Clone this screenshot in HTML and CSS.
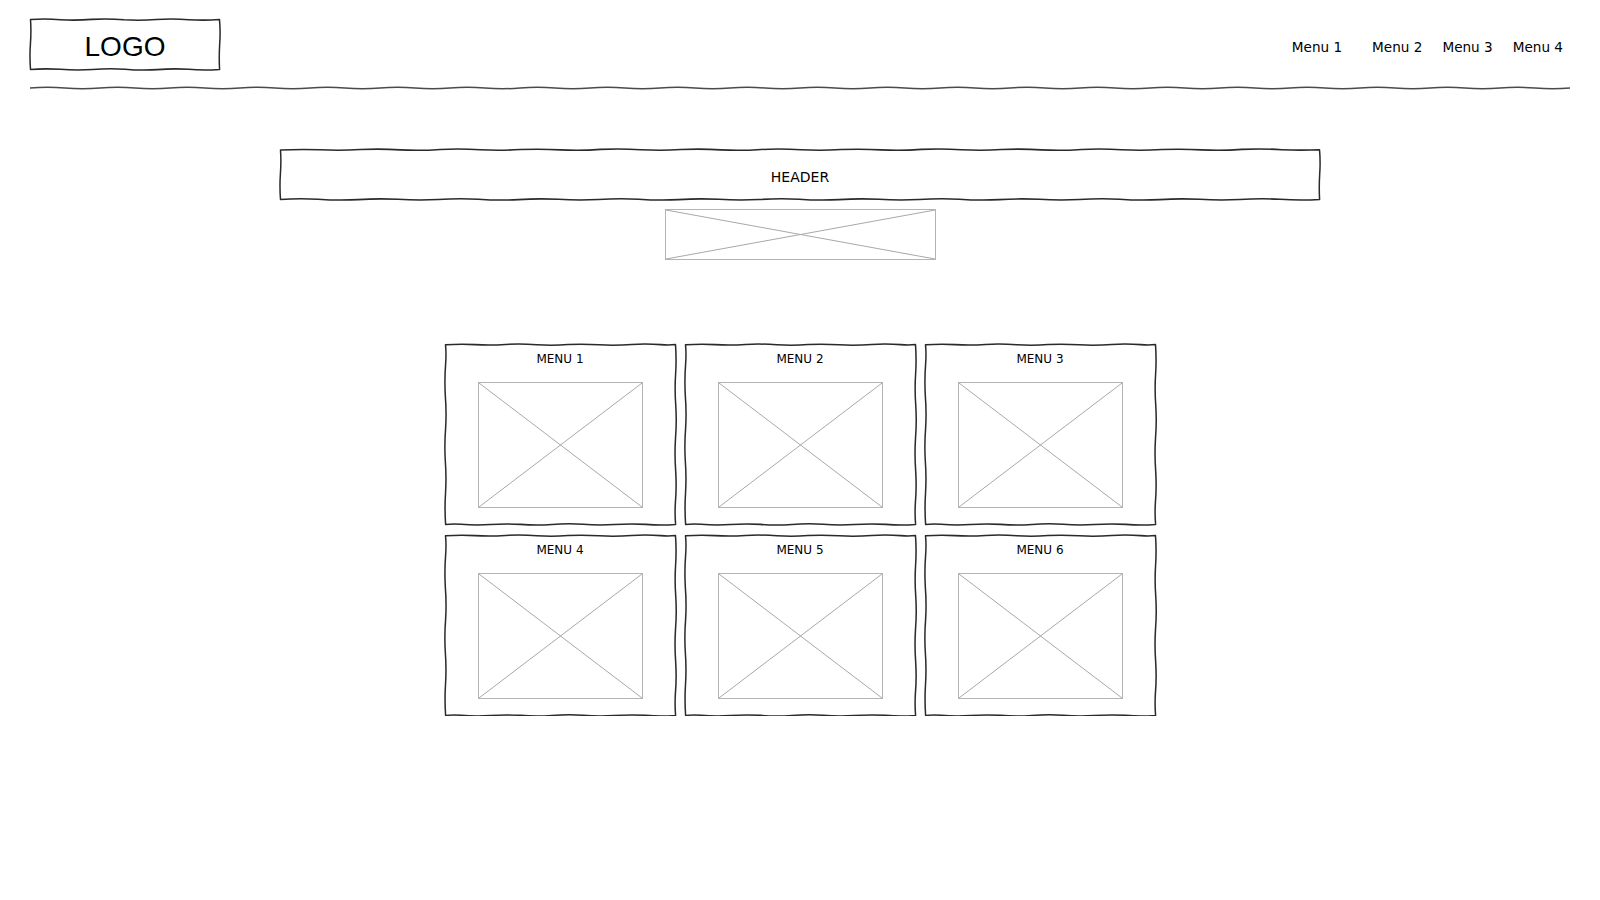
FILE: index.html
```html
<!DOCTYPE html>
<html lang="en">
<head>
  <meta charset="UTF-8">
  <meta name="viewport" content="width=device-width, initial-scale=1.0">
  <title>Wireframe</title>
  <link rel="stylesheet" href="styles.css">
</head>
<body>
  <!-- hand-drawn outlines, reused by every sketchy box -->
  <svg class="defs" width="0" height="0" aria-hidden="true">
    <symbol id="logo-outline" viewBox="0 0 190 51" preserveAspectRatio="none">
      <path d="M1.5,1.5 Q16,0.4 31,1.6 Q46,2.6 62,1.3 Q78,0.3 94,1.7 Q110,2.7 126,1.4 Q142,0.4 158,1.6 Q174,2.6 188.5,1.4 Q189.6,13 188.7,25 Q187.9,38 188.6,49.5 Q173,50.6 158,49.4 Q143,48.4 127,49.7 Q111,50.7 95,49.3 Q79,48.3 63,49.6 Q47,50.6 31,49.4 Q16,48.5 1.5,49.5 Q0.5,37 1.4,25 Q2.3,13 1.5,1.5 Z"/>
    </symbol>
    <symbol id="header-outline" viewBox="0 0 1040 51" preserveAspectRatio="none">
      <path d="M1.5,2 Q21,0.9 41,1.7 Q61,2.6 81,1.5 Q101,0.5 121,1.8 Q141,2.8 161,1.4 Q181,0.4 201,1.7 Q221,2.7 241,1.5 Q261,0.6 281,1.8 Q301,2.8 321,1.3 Q341,0.4 361,1.6 Q381,2.6 401,1.5 Q421,0.5 441,1.8 Q461,2.8 481,1.4 Q501,0.5 521,1.7 Q541,2.7 561,1.5 Q581,0.6 601,1.8 Q621,2.8 641,1.3 Q661,0.4 681,1.6 Q701,2.6 721,1.5 Q741,0.5 761,1.8 Q781,2.8 801,1.4 Q821,0.5 841,1.7 Q861,2.7 881,1.5 Q901,0.6 921,1.8 Q941,2.8 961,1.3 Q981,0.4 1001,1.6 Q1020,2.5 1038.5,1.6 Q1039.6,13 1038.7,25 Q1037.9,38 1038.6,49.5 Q1019,50.6 999,49.3 Q979,48.3 959,49.6 Q939,50.6 919,49.4 Q899,48.4 879,49.7 Q859,50.7 839,49.3 Q819,48.3 799,49.6 Q779,50.6 759,49.4 Q739,48.4 719,49.7 Q699,50.7 679,49.3 Q659,48.3 639,49.6 Q619,50.6 599,49.4 Q579,48.4 559,49.7 Q539,50.7 519,49.3 Q499,48.3 479,49.6 Q459,50.6 439,49.4 Q419,48.4 399,49.7 Q379,50.7 359,49.3 Q339,48.3 319,49.6 Q299,50.6 279,49.4 Q259,48.4 239,49.7 Q219,50.7 199,49.3 Q179,48.3 159,49.6 Q139,50.6 119,49.4 Q99,48.4 79,49.7 Q59,50.7 39,49.3 Q20,48.4 1.5,49.5 Q0.5,37 1.4,25 Q2.3,13 1.5,2 Z"/>
    </symbol>
    <symbol id="card-outline" viewBox="0 0 231 180" preserveAspectRatio="none">
      <path d="M1.5,1.8 Q16,0.8 31,1.6 Q46,2.5 61,1.4 Q76,0.6 92,1.7 Q108,2.6 123,1.5 Q138,0.7 154,1.8 Q170,2.7 186,1.4 Q201,0.6 215,1.6 Q223,2.3 229.5,1.5 Q230.6,16 229.6,31 Q228.6,46 229.8,62 Q230.8,78 229.5,94 Q228.5,110 229.7,126 Q230.7,142 229.4,157 Q228.7,168 229.6,178.5 Q215,179.6 200,178.4 Q185,177.4 169,178.6 Q153,179.7 138,178.3 Q123,177.3 107,178.5 Q91,179.6 76,178.4 Q61,177.4 46,178.6 Q31,179.6 17,178.3 Q9,177.6 1.6,178.5 Q0.5,163 1.5,148 Q2.5,132 1.3,116 Q0.3,100 1.6,84 Q2.6,68 1.3,52 Q0.4,36 1.6,21 Q2.4,10 1.5,1.8 Z"/>
    </symbol>
  </svg>

  <div class="topbar">
    <div class="logo sketch">
      <svg class="outline"><use href="#logo-outline" width="100%" height="100%"/></svg>
      LOGO
    </div>
    <nav class="nav">
      <a href="#" class="first">Menu 1</a>
      <a href="#">Menu 2</a>
      <a href="#">Menu 3</a>
      <a href="#">Menu 4</a>
    </nav>
  </div>
  <svg class="rule" viewBox="0 0 1540 4" preserveAspectRatio="none">
    <path d="M0,2 Q17.5,0.6 35,2 T70,2 T105,2 T140,2 T175,2 T210,2 T245,2 T280,2 T315,2 T350,2 T385,2 T420,2 T455,2 T490,2 T525,2 T560,2 T595,2 T630,2 T665,2 T700,2 T735,2 T770,2 T805,2 T840,2 T875,2 T910,2 T945,2 T980,2 T1015,2 T1050,2 T1085,2 T1120,2 T1155,2 T1190,2 T1225,2 T1260,2 T1295,2 T1330,2 T1365,2 T1400,2 T1435,2 T1470,2 T1505,2 T1540,2"/>
  </svg>

  <div class="main">
    <div class="header sketch">
      <svg class="outline"><use href="#header-outline" width="100%" height="100%"/></svg>
      HEADER
    </div>
    <div class="placeholder banner">
      <svg viewBox="0 0 100 100" preserveAspectRatio="none"><line x1="0" y1="0" x2="100" y2="100"/><line x1="0" y1="100" x2="100" y2="0"/></svg>
    </div>

    <div class="grid">
      <div class="card sketch">
        <svg class="outline"><use href="#card-outline" width="100%" height="100%"/></svg>
        <div class="card-title">MENU 1</div>
        <div class="placeholder thumb">
          <svg viewBox="0 0 100 100" preserveAspectRatio="none"><line x1="0" y1="0" x2="100" y2="100"/><line x1="0" y1="100" x2="100" y2="0"/></svg>
        </div>
      </div>
      <div class="card sketch">
        <svg class="outline"><use href="#card-outline" width="100%" height="100%"/></svg>
        <div class="card-title">MENU 2</div>
        <div class="placeholder thumb">
          <svg viewBox="0 0 100 100" preserveAspectRatio="none"><line x1="0" y1="0" x2="100" y2="100"/><line x1="0" y1="100" x2="100" y2="0"/></svg>
        </div>
      </div>
      <div class="card sketch">
        <svg class="outline"><use href="#card-outline" width="100%" height="100%"/></svg>
        <div class="card-title">MENU 3</div>
        <div class="placeholder thumb">
          <svg viewBox="0 0 100 100" preserveAspectRatio="none"><line x1="0" y1="0" x2="100" y2="100"/><line x1="0" y1="100" x2="100" y2="0"/></svg>
        </div>
      </div>
      <div class="card sketch">
        <svg class="outline"><use href="#card-outline" width="100%" height="100%"/></svg>
        <div class="card-title">MENU 4</div>
        <div class="placeholder thumb">
          <svg viewBox="0 0 100 100" preserveAspectRatio="none"><line x1="0" y1="0" x2="100" y2="100"/><line x1="0" y1="100" x2="100" y2="0"/></svg>
        </div>
      </div>
      <div class="card sketch">
        <svg class="outline"><use href="#card-outline" width="100%" height="100%"/></svg>
        <div class="card-title">MENU 5</div>
        <div class="placeholder thumb">
          <svg viewBox="0 0 100 100" preserveAspectRatio="none"><line x1="0" y1="0" x2="100" y2="100"/><line x1="0" y1="100" x2="100" y2="0"/></svg>
        </div>
      </div>
      <div class="card sketch">
        <svg class="outline"><use href="#card-outline" width="100%" height="100%"/></svg>
        <div class="card-title">MENU 6</div>
        <div class="placeholder thumb">
          <svg viewBox="0 0 100 100" preserveAspectRatio="none"><line x1="0" y1="0" x2="100" y2="100"/><line x1="0" y1="100" x2="100" y2="0"/></svg>
        </div>
      </div>
    </div>
  </div>
</body>
</html>
```

FILE: styles.css
```css
body {
  margin: 0;
  font-family: "DejaVu Sans", Verdana, sans-serif;
  color: #000;
  background-color: #fff;
}
.defs {
  position: absolute;
  width: 0;
  height: 0;
}

/* hand-drawn outline sits over the box, text stays in flow */
.sketch {
  position: relative;
}
.outline {
  position: absolute;
  top: -1px;
  left: -1px;
  width: calc(100% + 2px);
  height: calc(100% + 2px);
  overflow: visible;
  pointer-events: none;
  fill: none;
  stroke: #2a2a2a;
  stroke-width: 1.5;
  stroke-linejoin: round;
}

.topbar {
  display: flex;
  justify-content: space-between;
  align-items: center;
  padding: 19px 37px 0 30px;
}
.logo {
  width: 190px;
  height: 51px;
  box-sizing: border-box;
  display: flex;
  align-items: center;
  justify-content: center;
  padding-top: 5px;
  font-family: "Liberation Sans", Arial, sans-serif;
  font-size: 28px;
}
.nav {
  display: flex;
  gap: 20px;
  padding-top: 5px;
}
.nav a {
  color: #000;
  text-decoration: none;
  font-size: 13.6px;
}
.nav a.first {
  margin-right: 10px;
}
.rule {
  display: block;
  width: calc(100% - 60px);
  height: 4px;
  margin: 16px 30px 0;
  overflow: visible;
  fill: none;
  stroke: #4a4a4a;
  stroke-width: 1.5;
}

.main {
  display: flex;
  flex-direction: column;
  align-items: center;
  padding-top: 59px;
}
.header {
  width: 1040px;
  height: 51px;
  box-sizing: border-box;
  display: flex;
  align-items: center;
  justify-content: center;
  padding-top: 4px;
  font-size: 14px;
}

.placeholder {
  box-sizing: border-box;
  border: 1.5px solid #b4b4b4;
}
.placeholder svg {
  display: block;
  width: 100%;
  height: 100%;
}
.placeholder line {
  stroke: #a8a8a8;
  stroke-width: 1;
  vector-effect: non-scaling-stroke;
}
.banner {
  width: 271px;
  height: 51px;
  margin-top: 9px;
}

.grid {
  display: grid;
  grid-template-columns: repeat(3, 231px);
  grid-auto-rows: 181px;
  gap: 10px 9px;
  margin-top: 84px;
}
.card {
  display: flex;
  flex-direction: column;
  align-items: center;
  padding-top: 7px;
  box-sizing: border-box;
}
.card-title {
  font-size: 12px;
  line-height: 16px;
}
.thumb {
  width: 165px;
  height: 126px;
  margin-top: 15px;
}
```
